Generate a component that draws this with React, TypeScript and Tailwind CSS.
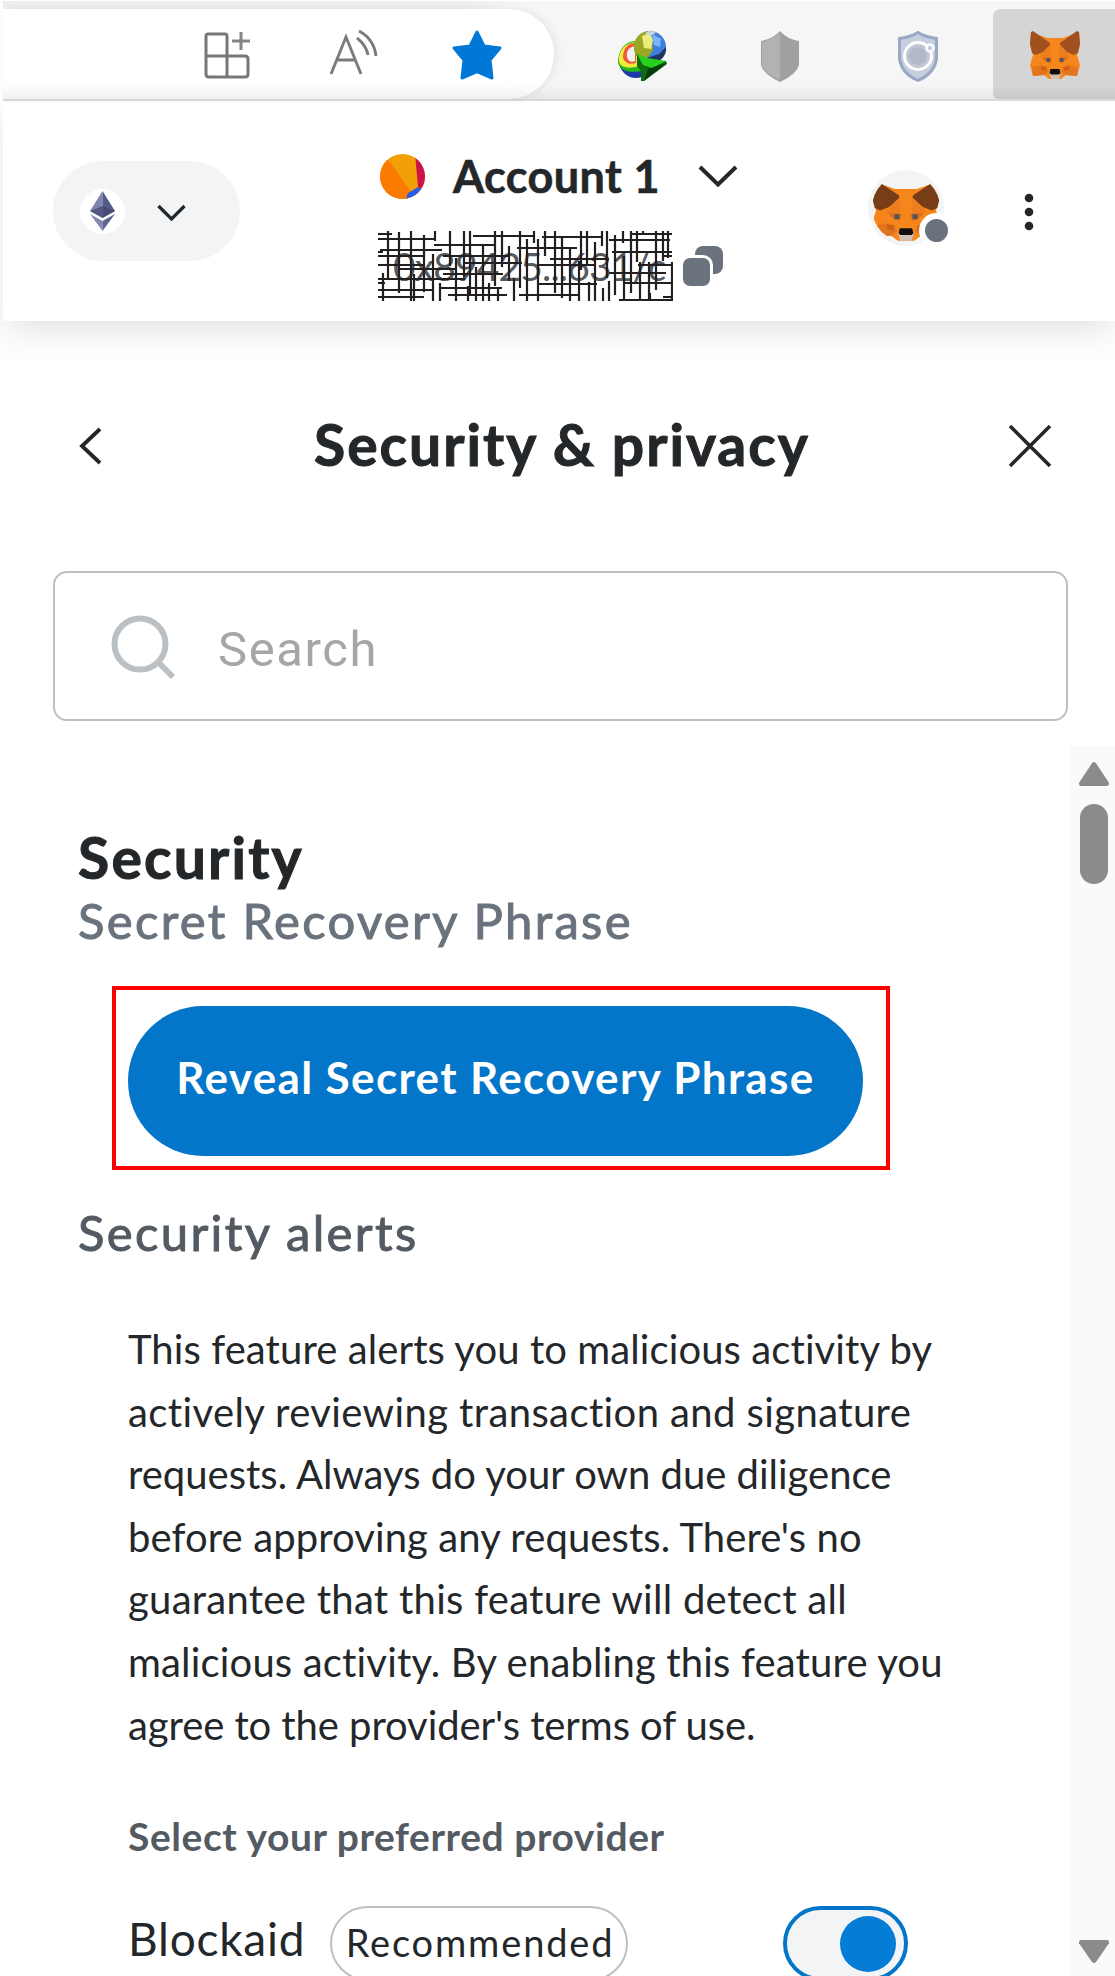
import React from "react";

function Fox({ className, ear }: { className: string; ear: string }) {
  return (
    <svg className={className} viewBox="0 0 50 50" preserveAspectRatio="none" fill="none">
      <path d="M1 2 17 8H33L49 2 50 14 47 25 50 35 47 46 36 45 31 49H19L14 45 3 46 0 35 3 25 0 14Z" fill="#f6851b" />
      <path d="M1 2 3 1 20 13 20 15 13 22 6 25 2 23 0 14ZM49 2 47 1 30 13 30 15 37 22 44 25 48 23 50 14Z" fill={ear} />
      <path d="M20 15 13 22 10 27 22 28 20 36 21 20ZM30 15 37 22 40 27 28 28 30 36 29 20Z" fill="#ee7d1e" />
      <path d="M2 37 12 35 19 41 14 45 3 46ZM48 37 38 35 31 41 36 45 47 46Z" fill="#e4751f" />
      <path d="M11 36 17 37 16 41 11 40ZM39 36 33 37 34 41 39 40Z" fill="#cd6116" />
      <path d="M12 27 22 28 20 33 15 31ZM38 27 28 28 30 33 35 31Z" fill="#d96d1c" />
      <path d="M16.500 28h3.600v4h-3.600zM29.900 28h3.600v4h-3.600z" fill="#4f5560" />
      <path d="M19 43 21 39H29L31 43 29 49H21Z" fill="#d0bfb2" />
      <path d="M20.500 39H29.500L30.500 43 29 44.500H21L19.500 43Z" fill="#120d0a" />
    </svg>
  );
}

function DownloadIcon() {
  return (
    <svg className="h-[51px] w-[52px]" viewBox="0 0 52 51" fill="none">
      <ellipse cx="19" cy="31" rx="17" ry="17" fill="#2138a8" />
      <path d="M1 33C1 18 9 12 18 11L24 41C14 43 4 42 1 33Z" fill="#22b814" />
      <path d="M2 32C1 19 9 13 19 12L22 36C13 39 4 38 2 32Z" fill="#f4ea3c" />
      <path d="M6 28C6 18 11 13 19 13V33C13 35 8 33 6 28Z" fill="#ef5a3c" />
      <path d="M10 27C9 20 13 17 18 16V31C14 33 11 31 10 27Z" fill="#f4f2f0" />
      <circle cx="33" cy="17" r="16" fill="#3f7fdc" />
      <path d="M33 1C23 1 16 9 17 19 18 26 22 30 27 30L32 26 36 20 35 10 33 6Z" fill="#9aa824" />
      <path d="M25 6 33 3 36 10 34 19 27 18Z" fill="#e9ee7c" />
      <path d="M35 4 44 9 43 17 37 15Z" fill="#79b5fb" />
      <path d="M49 17C50 25 44 33 34 33L30 28 42 24Z" fill="#20345f" />
      <path d="M28 3 34 0 39 3 33 6Z" fill="#c8d6dc" />
      <path d="M20 24 30 30 49 31 50 34 27 51H24V41L20 36Z" fill="#0d6c10" />
      <path d="M20 24 30 28 49 31 35 38 26 35Z" fill="#27d11d" />
      <path d="M49 33 27 51 31 39Z" fill="#083b0a" />
    </svg>
  );
}

function Toolbar() {
  return (
    <div className="relative z-20 ml-[3px] mt-px flex h-[100px] shrink-0 items-start border-b-2 border-[#dadada] bg-[#f6f6f6]">
      <div className="absolute left-0 top-0 h-[8px] w-[510px] bg-linear-to-r from-[#efefef] from-90% to-[#f6f6f6]" />
      <div className="relative mt-2 flex h-[90px] w-[551px] rounded-r-[45px] bg-white shadow-[3px_0_8px_rgba(0,0,0,0.07)]">
        <svg className="ml-[200px] mt-[21px] h-[50px] w-[48px] shrink-0" viewBox="0 0 48 50" fill="none" stroke="#767676" strokeWidth="3">
          <path d="M24 47V6Q24 4 22 4H5Q3 4 3 6V44Q3 47 6 47H42Q45 47 45 44V29Q45 26 42 26H3" />
          <path d="M38 2V20M29 11H47" stroke="#858585" />
        </svg>
        <svg className="ml-[78px] mt-[19px] h-[50px] w-[50px] shrink-0" viewBox="0 0 50 50" fill="none" stroke="#7b7b7b" strokeWidth="2.900">
          <path d="M2 46 17 9 32 46M7 32H27" />
          <path d="M28 10Q37 17 39 27M30 3Q45 11 47 28" />
        </svg>
        <svg className="ml-[72px] mt-[20px] h-[52px] w-[52px] shrink-0" viewBox="0 0 52 52">
          <path d="M26 3 33 17 49 19 39 31 41 49 26 42.500 11 49 13 31 3 19 19 17Z" fill="#0078d7" stroke="#0078d7" strokeWidth="3" strokeLinejoin="round" />
        </svg>
      </div>
      <div className="ml-[63px] mt-[29px]">
        <DownloadIcon />
      </div>
      <svg className="ml-[91px] mt-[30px] h-[51px] w-[40px] shrink-0" viewBox="0 0 40 51">
        <path d="M20 0Q27 8 39 10V34Q37 43 20 51 3 43 1 34V10Q13 8 20 0Z" fill="#a0a0a0" />
        <path d="M20 2V49Q4 42 2 34V11Q13 8 20 2Z" fill="#b2b2b2" />
      </svg>
      <svg className="ml-[98px] mt-[30px] h-[51px] w-[40px] shrink-0" viewBox="0 0 40 51" fill="none">
        <path d="M20 1.500Q27 6 38.500 7.500V27Q37 42 20 49.500 3 42 1.500 27V7.500Q13 6 20 1.500Z" fill="#c6cfde" stroke="#98a9c6" strokeWidth="3" />
        <circle cx="20" cy="25" r="13.500" fill="#c0c8d6" stroke="#fff" strokeWidth="3" />
        <circle cx="20" cy="25" r="9" fill="#b2b9c9" />
        <circle cx="32" cy="17" r="3.500" fill="#c6cfde" stroke="#fff" strokeWidth="2.500" />
      </svg>
      <div className="ml-auto mt-2 flex h-[90px] w-[122px] justify-center rounded-tl-lg rounded-bl-md bg-[#d5d5d5]">
        <Fox className="ml-[2px] mt-[21px] h-[50px] w-[50px]" ear="#a1511f" />
      </div>
      <div className="absolute inset-x-0 bottom-0 h-[14px] bg-linear-to-b from-transparent to-black/6" />
    </div>
  );
}

const SCRIBBLE = [
  // horizontal strokes
  "M0 3H14M0 8H57M56 14H116M95 5H156M164 6H224M231 9H292M252 3H294M2 19H64M0 25H46M0 34H45M20 38H79M86 32H144",
  "M65 25H130M139 17H199M172 28H231M65 43H125M160 34H217M0 48H87M0 59H54M62 57H124M0 66H46M70 64H129M141 64H200",
  "M159 53H219M231 42H288M246 52H294M260 34H294M234 21H294M241 69H294M285 66H294M285 25H294M0 52H7M0 21H5",
  // vertical strokes
  "M10 0V49M21 1V62M33 0V70M46 4V61M57 0V10M72 0V35M86 0V46M92 0V65M117 0V55M124 0V36M131 15V50M142 0V57M156 0V12",
  "M55 23V70M62 52V70M5 42V70M36 43V70M78 27V70M105 15V70M98 36V70M90 55V70M111 52V70M136 47V70M149 8V70M160 8V70",
  "M167 0V25M177 0V62M184 7V67M192 17V70M203 0V39M209 0V34M217 11V70M224 0V15M229 0V47M237 4V64M245 0V12M246 25V70",
  "M253 0V62M259 0V31M265 0V3M262 31V70M271 31V70M278 0V59M285 0V30M290 0V27M294 31V70M201 30V70M211 51V70M225 57V70M231 50V70M272 62V70M120 56V70",
];

function Header() {
  return (
    <header className="relative z-10 ml-[3px] flex h-[220px] shrink-0 items-start bg-white shadow-[0_12px_36px_-4px_rgba(0,0,0,0.13)]">
      <button className="ml-[50px] mt-[60px] flex h-[100px] w-[187px] shrink-0 items-center rounded-full bg-[#f2f4f6]">
        <span className="ml-[27px] flex h-[45px] w-[45px] items-center justify-center rounded-full bg-white">
          <svg className="h-[40px] w-[25px]" viewBox="0 0 25 40">
            <path d="M12.500 0V27L0 20Z" fill="#7f86ae" />
            <path d="M12.500 0V27L25 20Z" fill="#555b86" />
            <path d="M12.500 15 0 20 12.500 27 25 20Z" fill="#444873" fillOpacity=".75" />
            <path d="M0 23 12.500 40V30Z" fill="#8388b2" />
            <path d="M25 23 12.500 40V30Z" fill="#5d638e" />
          </svg>
        </span>
        <svg className="ml-[32px] mt-[3px] h-[18px] w-[29px]" viewBox="0 0 29 18" fill="none" stroke="#24272a" strokeWidth="3.300">
          <path d="M1.500 2 14.500 15 27.500 2" />
        </svg>
      </button>

      <div className="ml-[137px] mt-[43px] w-[360px] shrink-0">
        <div className="flex h-[64px] items-center pl-[3px]">
          <svg className="h-[45px] w-[45px] shrink-0" viewBox="0 0 45 45">
            <clipPath id="jazzicon"><circle cx="22.500" cy="22.500" r="22.500" /></clipPath>
            <g clipPath="url(#jazzicon)">
              <path d="M0 0H45V45H0Z" fill="#f2a007" />
              <path d="M35 0H45V38L38 33Z" fill="#cc1446" />
              <path d="M0 0 10 8 31 38 27 45H0Z" fill="#fb7b02" />
              <path d="M28 39 38 33 45 38 38 45H26Z" fill="#2a5ee0" />
            </g>
          </svg>
          <span className="ml-[28px] whitespace-nowrap text-[45px] leading-[62px] font-bold tracking-[0.400px] text-[#24272a] [-webkit-text-stroke:0.6px]">Account 1</span>
          <svg className="ml-[38px] h-[22px] w-[40px] shrink-0" viewBox="0 0 40 22" fill="none" stroke="#24272a" strokeWidth="4">
            <path d="M2 2 20 19.500 38 2" />
          </svg>
        </div>
        <div className="mt-[22px] flex h-[72px] items-center">
          <div className="relative flex h-[72px] w-[295px] items-center">
            <span className="ml-[16px] whitespace-nowrap text-[39px] leading-[60px] tracking-[-0.860px] text-[#535a61]">0x89425...631/c</span>
            <svg className="absolute inset-0 h-[72px] w-[296px]" viewBox="-1 -1 296 72" fill="none" stroke="#231f20" strokeWidth="2.200">
              {SCRIBBLE.map((d) => (
                <path key={d} d={d} />
              ))}
            </svg>
          </div>
          <svg className="ml-[10px] h-[42px] w-[42px] shrink-0" viewBox="0 0 42 42" fill="#6a737d">
            <rect x="13" y="1" width="28" height="28" rx="8" />
            <rect x="-2" y="10" width="33" height="33" rx="10" fill="#fff" />
            <rect x="1" y="13" width="27" height="28" rx="7" />
          </svg>
        </div>
      </div>

      <div className="relative ml-[131px] mt-[69px] flex h-[76px] w-[76px] shrink-0 items-center justify-center rounded-full bg-[#f2f4f6]">
        <span className="flex h-[68px] w-[68px] items-end justify-center overflow-hidden rounded-full">
          <Fox className="h-[63px] w-[68px] shrink-0" ear="#763d16" />
        </span>
        <span className="absolute right-[-10px] bottom-[-2px] flex h-[35px] w-[35px] items-center justify-center rounded-full bg-white">
          <span className="h-[23px] w-[23px] rounded-full bg-[#6a737d]" />
        </span>
      </div>
      <svg className="ml-[79px] mt-[92px] h-[38px] w-[12px] shrink-0" viewBox="0 0 12 38" fill="#24272a">
        <circle cx="6" cy="5" r="4.300" />
        <circle cx="6" cy="19" r="4.300" />
        <circle cx="6" cy="33" r="4.300" />
      </svg>
    </header>
  );
}

function Scrollbar() {
  return (
    <div className="flex w-[45px] shrink-0 flex-col items-center bg-[#fafafa] pl-[3px]">
      <svg className="mt-[15px] h-[26px] w-[32px] shrink-0" viewBox="0 0 32 24" preserveAspectRatio="none" fill="#8b8b8b">
        <path d="M16 1Q17 1 18 2L31 20Q31 23 29 23H3Q1 23 1 20L14 2Q15 1 16 1Z" />
      </svg>
      <div className="mt-[17px] h-[80px] w-[28px] shrink-0 rounded-full bg-[#8b8b8b]" />
      <svg className="mt-[1055px] h-[25px] w-[32px] shrink-0" viewBox="0 0 32 24" preserveAspectRatio="none" fill="#8b8b8b">
        <path d="M16 23Q17 23 18 22L31 4Q31 1 29 1H3Q1 1 1 4L14 22Q15 23 16 23Z" />
      </svg>
    </div>
  );
}

export default function App() {
  return (
    <div className="flex h-[1976px] w-[1115px] flex-col overflow-hidden bg-white font-['Lato',sans-serif] text-[#24272a] [font-variant-ligatures:none]">
      <Toolbar />
      <Header />

      <div className="mt-[83px] flex h-[80px] shrink-0 items-center">
        <svg className="ml-[78px] mt-[4px] h-[40px] w-[26px] shrink-0" viewBox="0 0 26 40" fill="none" stroke="#24272a" strokeWidth="3.800">
          <path d="M22 3 4 20 22 37" />
        </svg>
        <h1 className="ml-[210px] w-[500px] whitespace-nowrap text-[57px] leading-[80px] font-bold tracking-[2px] [-webkit-text-stroke:1px]">Security &amp; privacy</h1>
        <svg className="ml-[194px] mt-[4px] h-[44px] w-[44px] shrink-0" viewBox="0 0 44 44" fill="none" stroke="#24272a" strokeWidth="3.500">
          <path d="M2 2 42 42M42 2 2 42" />
        </svg>
      </div>

      <div className="ml-[53px] mt-[87px] flex h-[150px] w-[1015px] shrink-0 items-center rounded-[14px] border-2 border-[#bbc0c5] pl-[56px]">
        <svg className="mt-[3px] h-[66px] w-[66px] shrink-0" viewBox="0 0 66 66" fill="none" stroke="#bbc0c5" strokeWidth="6">
          <circle cx="29" cy="29" r="25.500" />
          <path d="M47 47 62 62" />
        </svg>
        <span className="ml-[41px] mt-[8px] whitespace-nowrap font-['Roboto',sans-serif] text-[49px] leading-[60px] tracking-[1.600px] text-[#a6a6a6]">Search</span>
      </div>

      <div className="mt-[25px] flex min-h-0 flex-1">
        <main className="flex min-w-0 flex-1 flex-col overflow-hidden pl-[78px]">
          <h2 className="mt-[81px] h-[60px] shrink-0 text-[57px] leading-[60px] font-bold tracking-[2.200px] [-webkit-text-stroke:1px]">Security</h2>
          <p className="mt-[3px] h-[60px] shrink-0 text-[49px] leading-[60px] tracking-[2.320px] text-[#6a737d] [-webkit-text-stroke:1px]">Secret Recovery Phrase</p>
          <div className="ml-[34px] mt-[36px] h-[184px] w-[778px] shrink-0 border-4 border-[#fe0000] pl-[12px] pt-[16px]">
            <button className="flex h-[150px] w-[735px] items-center justify-center rounded-full bg-[#0376c9] pb-[8px] text-[44px] leading-[60px] font-bold tracking-[1.360px] whitespace-nowrap text-white">Reveal Secret Recovery Phrase</button>
          </div>
          <p className="mt-[32px] h-[60px] shrink-0 text-[49px] leading-[60px] tracking-[2.350px] text-[#535a61] [-webkit-text-stroke:1px]">Security alerts</p>
          <p className="ml-[50px] mt-[56px] shrink-0 text-[40px] leading-[62.600px] whitespace-nowrap">
            <span className="block tracking-[0.090px]">This feature alerts you to malicious activity by</span>
            <span className="block tracking-[0.400px]">actively reviewing transaction and signature</span>
            <span className="block tracking-[0px]">requests. Always do your own due diligence</span>
            <span className="block tracking-[0.100px]">before approving any requests. There's no</span>
            <span className="block tracking-[0.280px]">guarantee that this feature will detect all</span>
            <span className="block tracking-[0.170px]">malicious activity. By enabling this feature you</span>
            <span className="block tracking-[-0.080px]">agree to the provider's terms of use.</span>
          </p>
          <p className="ml-[50px] mt-[50px] h-[60px] shrink-0 text-[39px] leading-[60px] font-bold tracking-[0.560px] text-[#535a61]">Select your preferred provider</p>
          <div className="ml-[50px] mt-[40px] flex h-[75px] shrink-0 items-center">
            <span className="mt-[-9px] w-[202px] shrink-0 text-[46px] leading-[60px] tracking-[0.750px]">Blockaid</span>
            <span className="flex h-[75px] w-[298px] shrink-0 items-center justify-center rounded-full border-2 border-[#bbc0c5] pb-[4px] pl-[2px] text-[38px] leading-[60px] tracking-[1.850px]">Recommended</span>
            <span className="ml-[155px] flex h-[75px] w-[125px] shrink-0 items-center justify-end rounded-full border-4 border-[#0376c9] bg-[#f2f4f6] pr-[8px]">
              <span className="h-[56px] w-[56px] rounded-full bg-[#037dd6]" />
            </span>
          </div>
        </main>
        <Scrollbar />
      </div>
    </div>
  );
}
